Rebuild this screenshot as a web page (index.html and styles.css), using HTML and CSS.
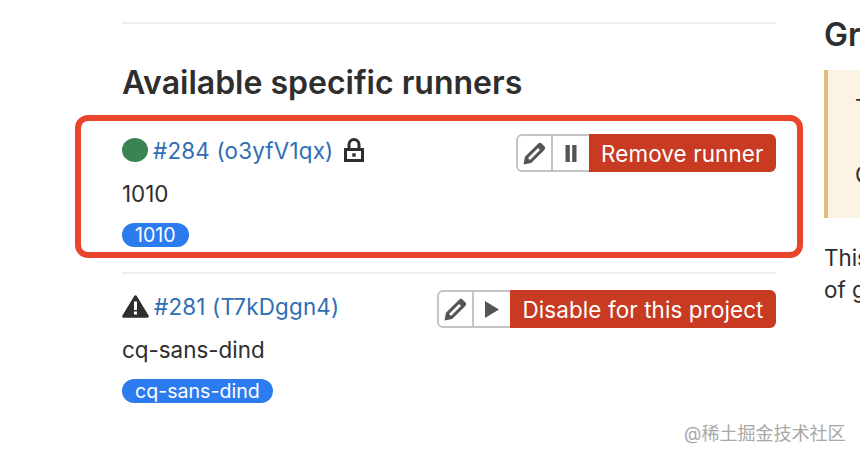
FILE: index.html
```html
<!DOCTYPE html>
<html lang="en">
<head>
    <meta charset="UTF-8">
    <title>Runners</title>
    <link rel="stylesheet" href="styles.css">
</head>
<body>
    <div class="page">
        <div class="main">
            <hr class="rule">
            <h2 class="heading">Available specific runners</h2>

            <div class="runner runner-first">
                <div class="runner-info">
                    <div class="runner-title">
                        <span class="dot"></span>
                        <a class="runner-link">#284 (o3yfV1qx)</a>
                        <svg class="lock" width="20" height="24" viewBox="0 0 20 24">
                            <path d="M1.5 11.5h17v11h-17z" fill="none" stroke="#2e2e2e" stroke-width="3"/>
                            <path d="M5 10V6.5a5 5 0 0 1 10 0V10" fill="none" stroke="#2e2e2e" stroke-width="3"/>
                            <rect x="8.3" y="15.3" width="3.4" height="3.4" fill="#2e2e2e"/>
                        </svg>
                    </div>
                    <div class="runner-desc">1010</div>
                    <span class="tag">1010</span>
                </div>
                <div class="actions">
                    <button class="btn btn-icon btn-edit">
                        <svg width="25" height="25" viewBox="0 0 24 24"><use href="#pencil"/></svg>
                    </button>
                    <button class="btn btn-icon btn-state">
                        <svg width="12" height="17" viewBox="0 0 12 17">
                            <rect x="0.5" y="0" width="4.3" height="17" fill="#555"/>
                            <rect x="7.2" y="0" width="4.3" height="17" fill="#555"/>
                        </svg>
                    </button>
                    <button class="btn btn-danger">Remove runner</button>
                </div>
            </div>

            <div class="runner">
                <div class="runner-info">
                    <div class="runner-title">
                        <svg class="warn" width="27" height="23" viewBox="0 0 27 23">
                            <path d="M13.5 1.8 L25.3 21.2 H1.7 Z" fill="#2e2e2e" stroke="#2e2e2e" stroke-width="3" stroke-linejoin="round"/>
                            <rect x="12" y="6.5" width="3" height="8.5" fill="#fff"/>
                            <rect x="12" y="16.5" width="3" height="3" fill="#fff"/>
                        </svg>
                        <a class="runner-link">#281 (T7kDggn4)</a>
                    </div>
                    <div class="runner-desc">cq-sans-dind</div>
                    <span class="tag">cq-sans-dind</span>
                </div>
                <div class="actions">
                    <button class="btn btn-icon btn-edit">
                        <svg width="25" height="25" viewBox="0 0 24 24"><use href="#pencil"/></svg>
                    </button>
                    <button class="btn btn-icon btn-state">
                        <svg width="14" height="17" viewBox="0 0 14 17">
                            <path d="M0 0 L14 8.5 L0 17 Z" fill="#555"/>
                        </svg>
                    </button>
                    <button class="btn btn-danger">Disable for this project</button>
                </div>
            </div>
        </div>

        <div class="side">
            <h2 class="heading side-heading">Group runners</h2>
            <div class="notice">
                <p>These runners are shared</p>
                <p>GitLab group runners</p>
            </div>
            <p class="side-text">This group does not provide any<br>of group runners yet</p>
        </div>
    </div>

    <div class="highlight"></div>
    <div class="watermark">@稀土掘金技术社区</div>

    <svg class="defs" width="0" height="0">
        <defs>
            <g id="pencil">
                <path d="M2.8 15.2 L15.2 2.8 a2.8 2.8 0 0 1 4 0 l2 2 a2.8 2.8 0 0 1 0 4 L8.8 21.2 L1.5 22.5 Z" fill="#555"/>
                <path d="M5.8 16.4 L15.4 6.8 L17.2 8.6 L7.6 18.2 Z" fill="#fff"/>
            </g>
        </defs>
    </svg>
</body>
</html>
```

FILE: styles.css
```css
html, body {
    margin: 0;
    height: 460px;
    overflow: hidden;
    background-color: #fff;
}

body {
    font-family: Inter, "Noto Sans CJK SC", sans-serif;
    color: #2e2e2e;
    font-size: 22.4px;
    position: relative;
}

.page {
    display: flex;
    padding-left: 122px;
    width: 860px;
    box-sizing: border-box;
    overflow: hidden;
}

.main {
    width: 654px;
    flex-shrink: 0;
    padding-top: 22px;
}

.rule {
    margin: 0;
    border: none;
    border-top: 2px solid #eeeeee;
}

.heading {
    margin: 0;
    font-size: 32px;
    line-height: 40px;
    font-weight: 600;
}

.main .heading {
    margin-top: 39px;
    margin-bottom: 31px;
}

.runner {
    display: flex;
    justify-content: space-between;
    align-items: flex-start;
}

.runner-first {
    height: 138px;
    border-bottom: 2px solid #eeeeee;
    margin-bottom: 16px;
}

.runner-info {
    display: flex;
    flex-direction: column;
    align-items: flex-start;
}

.runner-title {
    display: flex;
    align-items: center;
    gap: 5px;
    height: 32px;
}

.dot {
    width: 26px;
    height: 24px;
    border-radius: 50%;
    background-color: #3a8353;
}

.runner-link {
    color: #2f6db5;
    letter-spacing: 0.2px;
}

.lock {
    margin-left: 6px;
}

.runner-desc {
    margin-top: 12px;
    line-height: 32px;
}

.tag {
    margin-top: 13px;
    padding: 0 13px;
    height: 24px;
    line-height: 24px;
    border-radius: 12px;
    background-color: #2c7cf0;
    color: #fff;
    font-size: 19.6px;
}

.actions {
    display: flex;
}

.btn {
    height: 38px;
    font-family: inherit;
    font-size: 22.4px;
    box-sizing: border-box;
    padding: 0;
    display: flex;
    align-items: center;
    justify-content: center;
}

.btn-icon {
    background-color: #fff;
    border: 2px solid #c4c4c4;
}

.btn-edit {
    width: 37px;
    border-radius: 6px 0 0 6px;
}

.btn-state {
    width: 36px;
    border-left: none;
    border-right: none;
}

.btn-danger {
    padding: 0 12.5px;
    background-color: #c83a22;
    border: none;
    color: #fff;
    letter-spacing: 0.12px;
    border-radius: 0 6px 6px 0;
}

.side {
    margin-left: 48px;
    flex-shrink: 0;
    width: 340px;
    padding-top: 15px;
}

.notice {
    margin-top: 15px;
    height: 148px;
    box-sizing: border-box;
    padding: 24px 0 0 27px;
    background-color: #fbf3e3;
    border-left: 4px solid #e4bd7c;
    white-space: nowrap;
}

.notice p {
    margin: 0 0 40px;
    line-height: 27px;
}

.side-text {
    margin: 24px 0 0;
    line-height: 32px;
    white-space: nowrap;
}

.highlight {
    position: absolute;
    left: 75px;
    top: 115px;
    width: 728px;
    height: 143px;
    box-sizing: border-box;
    border: 6px solid #e8452c;
    border-radius: 13px;
}

.watermark {
    position: absolute;
    left: 684px;
    top: 423px;
    font-size: 18px;
    color: #a8a8a8;
    line-height: 22px;
    white-space: nowrap;
}

.defs {
    position: absolute;
}
```
